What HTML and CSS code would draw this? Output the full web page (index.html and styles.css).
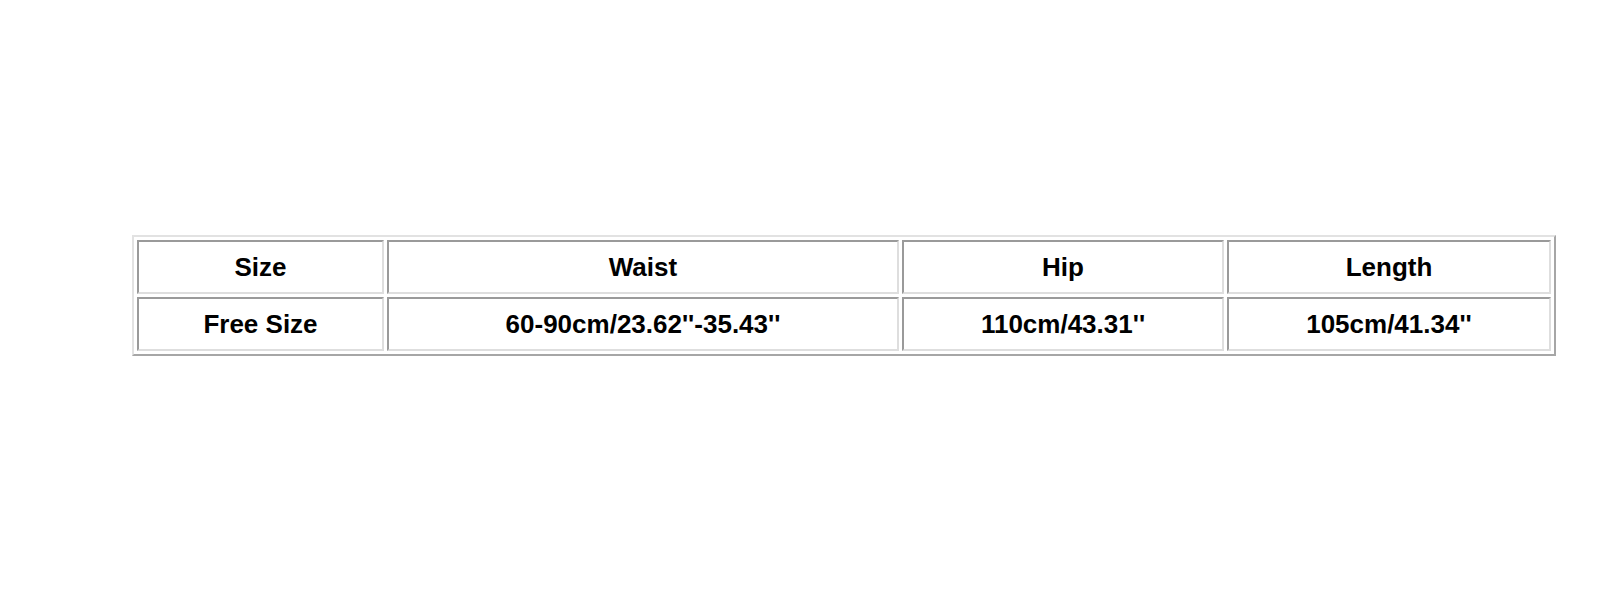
FILE: index.html
```html
<!DOCTYPE html>
<html lang="en">
<head>
  <meta charset="UTF-8" />
  <title>Size Chart</title>
  <link rel="stylesheet" href="styles.css">
</head>
<body>
  <main class="chart">
    <table class="size-table">
      <colgroup>
        <col class="col-size">
        <col class="col-waist">
        <col class="col-hip">
        <col class="col-length">
      </colgroup>
      <tr>
        <td>Size</td>
        <td>Waist</td>
        <td>Hip</td>
        <td>Length</td>
      </tr>
      <tr>
        <td>Free Size</td>
        <td>60-90cm/23.62''-35.43''</td>
        <td>110cm/43.31''</td>
        <td>105cm/41.34''</td>
      </tr>
    </table>
  </main>
</body>
</html>
```

FILE: styles.css
```css
* {
  box-sizing: border-box;
}

body {
  margin: 0;
  background: #fff;
  color: #000;
  font-family: 'Liberation Sans', Arial, sans-serif;
}

.chart {
  padding: 235px 0 0 132px;
}

.size-table {
  width: 1424px;
  table-layout: fixed;
  border-collapse: separate;
  border-spacing: 3px;
  border: 2px solid;
  border-color: #e2e2e2 #a6a6a6 #a6a6a6 #e2e2e2;
}

.col-size { width: 247px; }
.col-waist { width: 512px; }
.col-hip { width: 322px; }
.col-length { width: 324px; }

.size-table td {
  height: 54px;
  padding: 0;
  text-align: center;
  vertical-align: middle;
  font-size: 26px;
  font-weight: bold;
  border: 2px solid;
  border-color: #9a9a9a #dedede #dedede #9a9a9a;
}
```
